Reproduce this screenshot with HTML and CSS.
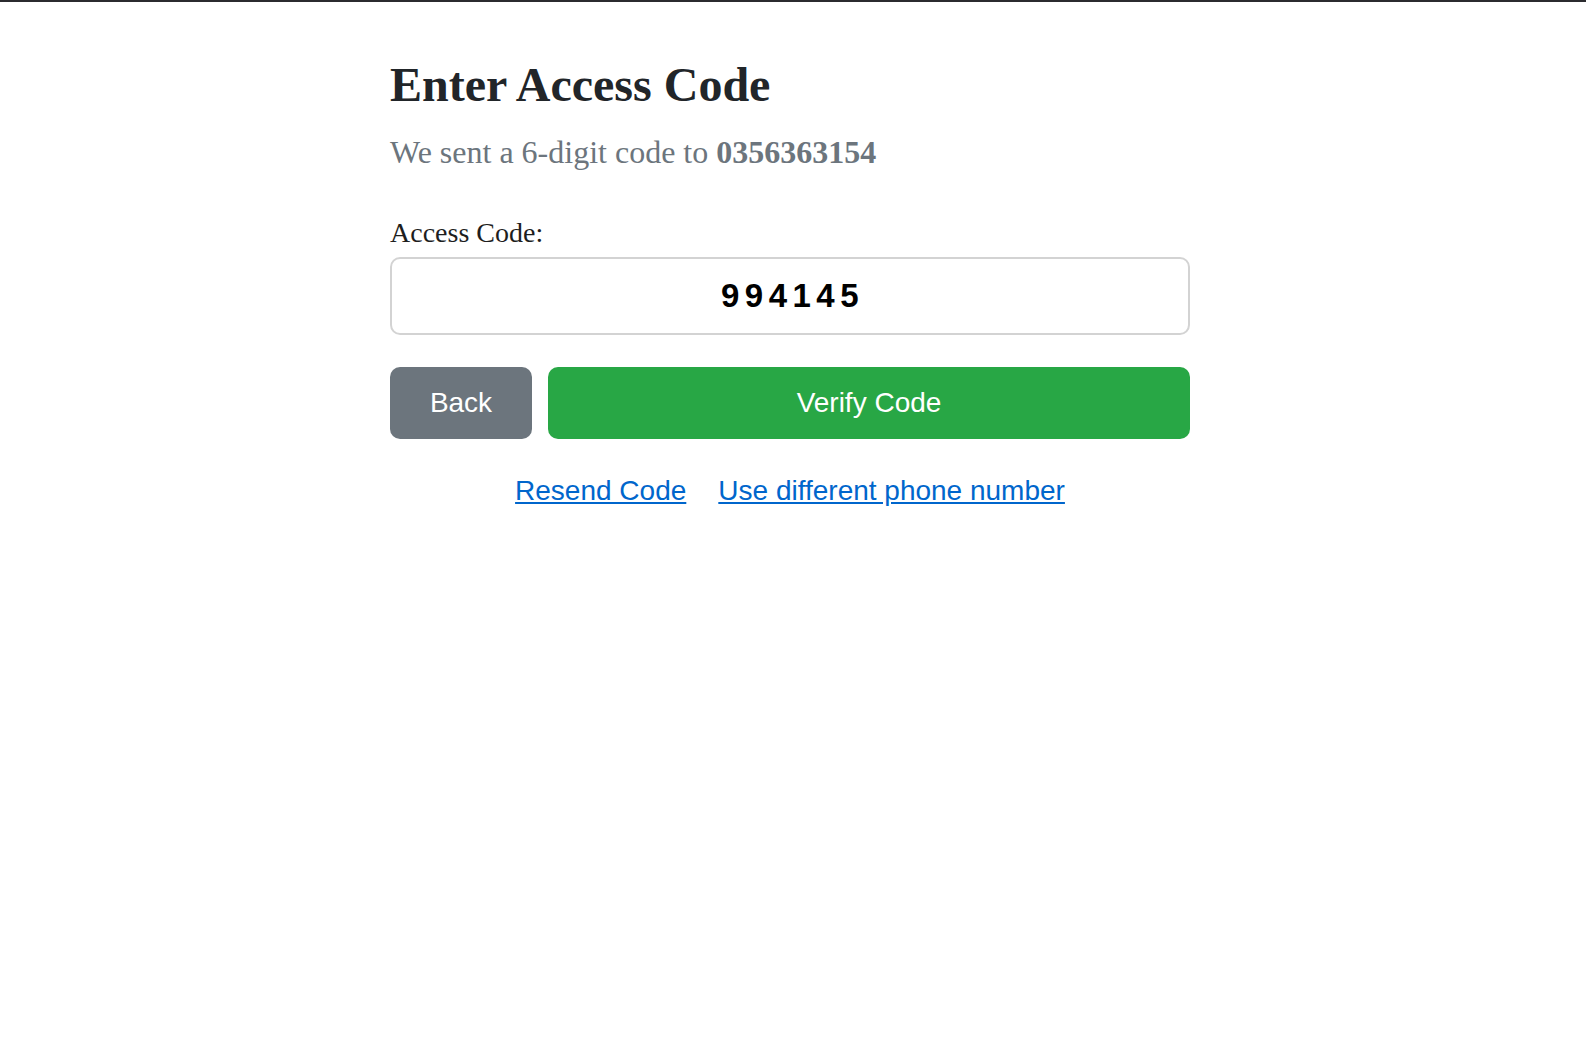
FILE: index.html
```html
<!DOCTYPE html>
<html lang="en">
<head>
<meta charset="utf-8">
<title>Enter Access Code</title>
<link rel="stylesheet" href="styles.css">
</head>
<body>
<div class="topbar"></div>
<main class="page">
  <h1 class="title">Enter Access Code</h1>
  <p class="subtitle">We sent a 6-digit code to <strong>0356363154</strong></p>
  <form class="form">
    <label class="label" for="code">Access Code:</label>
    <input class="code-input" id="code" type="text" value="994145">
    <div class="actions">
      <button type="button" class="btn btn-back">Back</button>
      <button type="button" class="btn btn-verify">Verify Code</button>
    </div>
  </form>
  <div class="links">
    <a href="#" class="link">Resend Code</a>
    <a href="#" class="link">Use different phone number</a>
  </div>
</main>
</body>
</html>
```
FILE: styles.css
```css
html, body {
  margin: 0;
  padding: 0;
  background: #ffffff;
}

body {
  font-family: "Liberation Serif", "Times New Roman", serif;
  color: #212529;
}

.topbar {
  height: 2px;
  background: #2b2b2f;
}

.page {
  max-width: 800px;
  margin: 0 auto;
  padding-right: 6px;
}

.title {
  font-size: 48px;
  line-height: 56px;
  font-weight: bold;
  margin: 55px 0 0;
  color: #212529;
}

.subtitle {
  font-size: 32px;
  line-height: 36px;
  margin: 21px 0 0;
  color: #6c757d;
}

.subtitle strong {
  font-weight: bold;
}

.form {
  display: flex;
  flex-direction: column;
  margin: 0;
}

.label {
  font-size: 28px;
  line-height: 32px;
  margin-top: 47px;
  color: #1e1e1e;
}

.code-input {
  box-sizing: border-box;
  width: 100%;
  height: 78px;
  margin-top: 8px;
  border: 2px solid #d3d3d3;
  border-radius: 10px;
  background: #fff;
  text-align: center;
  font-family: "Liberation Sans", Arial, sans-serif;
  font-weight: bold;
  font-size: 33px;
  letter-spacing: 5.5px;
  color: #000;
  padding: 0 0 0 5px;
  outline: none;
}

.actions {
  display: flex;
  gap: 16px;
  margin-top: 32px;
}

.btn {
  height: 72px;
  border: none;
  border-radius: 10px;
  color: #fff;
  font-family: "Liberation Sans", Arial, sans-serif;
  font-size: 28px;
  display: flex;
  align-items: center;
  justify-content: center;
  padding: 0;
  cursor: pointer;
}

.btn-back {
  width: 142px;
  flex: 0 0 142px;
  background: #6c757d;
}

.btn-verify {
  flex: 1 1 auto;
  background: #28a745;
}

.links {
  display: flex;
  justify-content: center;
  gap: 32px;
  margin-top: 36px;
  font-family: "Liberation Sans", Arial, sans-serif;
  font-size: 28px;
  line-height: 32px;
}

.link {
  color: #0066cc;
  text-decoration: underline;
}
```
